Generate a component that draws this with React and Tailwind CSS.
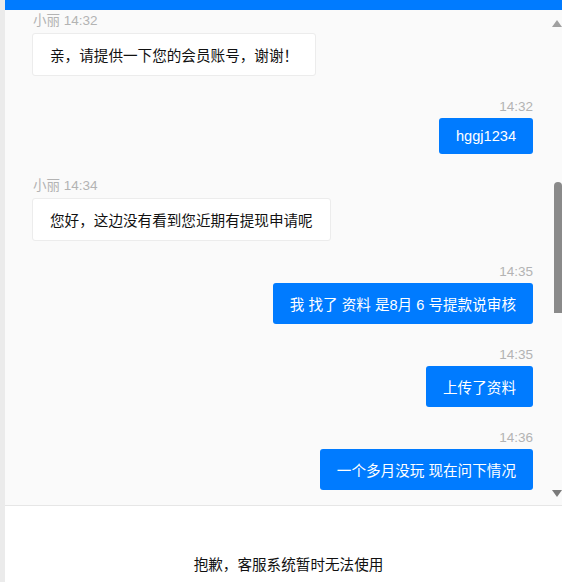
const messages = [
  { id: 1, side: 'left', name: '小丽', time: '14:32', text: '亲，请提供一下您的会员账号，谢谢！' },
  { id: 2, side: 'right', time: '14:32', text: 'hggj1234' },
  { id: 3, side: 'left', name: '小丽', time: '14:34', text: '您好，这边没有看到您近期有提现申请呢' },
  { id: 4, side: 'right', time: '14:35', text: '我 找了 资料 是8月 6 号提款说审核' },
  { id: 5, side: 'right', time: '14:35', text: '上传了资料' },
  { id: 6, side: 'right', time: '14:36', text: '一个多月没玩 现在问下情况' },
];

const Message = ({ msg, first }) => {
  const left = msg.side === 'left';
  return (
    <div className={`flex flex-col ${left ? 'items-start' : 'items-end'} ${first ? '' : 'mt-[22px]'}`}>
      <div className={`text-[13.5px] text-[#b3b3b3] mb-[2px] ${left ? 'leading-[20px] pl-[1px]' : 'leading-[18px]'}`}>
        {left ? `${msg.name} ${msg.time}` : msg.time}
      </div>
      {left ? (
        <div className="bg-white border border-[#ececec] rounded-[3px] px-[17px] py-[10px] text-[14.6px] leading-[normal] text-[#111]">
          {msg.text}
        </div>
      ) : (
        <div className="bg-[#007bff] rounded-[3px] px-[17px] py-[10px] text-[14.6px] leading-[normal] text-white">
          {msg.text}
        </div>
      )}
    </div>
  );
};

// fake scrollbar column on the right of the chat list
const ScrollTrack = () => (
  <div className="w-[12px] flex flex-col bg-[#fafafa]">
    <svg width="12" height="9" viewBox="0 0 12 9" className="mt-[9px]">
      <polygon points="2,8 7,1 12,8" fill="#a0a0a0" />
    </svg>
    <div className="h-[154px]" />
    <div className="ml-[4px] w-[8px] h-[131px] bg-[#8a8a8a] rounded-t-[4px]" />
    <div className="flex-1" />
    <svg width="12" height="9" viewBox="0 0 12 9" className="mb-[7px]">
      <polygon points="2,1 12,1 7,8" fill="#7a7a7a" />
    </svg>
  </div>
);

export default function App() {
  return (
    <div
      className="w-[562px] h-[582px] flex bg-white overflow-hidden"
      style={{ fontFamily: '"Liberation Sans", "Noto Sans CJK SC", sans-serif' }}
    >
      <div className="w-[5px] bg-[#ebebeb]" />
      <div className="flex-1 flex flex-col">
        <div className="h-[10px] bg-[#007bff]" />
        <div className="h-[495px] flex bg-[#fafafa]">
          <div className="flex-1 pl-[27px] pr-[17px] pt-[1px]">
            {messages.map((m, i) => (
              <Message key={m.id} msg={m} first={i === 0} />
            ))}
          </div>
          <ScrollTrack />
        </div>
        <div className="flex-1 border-t border-[#e6e6e6] flex items-end justify-center pb-[5px] pl-[10px]">
          <span className="text-[14.6px] text-[#111]">抱歉，客服系统暂时无法使用</span>
        </div>
      </div>
    </div>
  );
}
